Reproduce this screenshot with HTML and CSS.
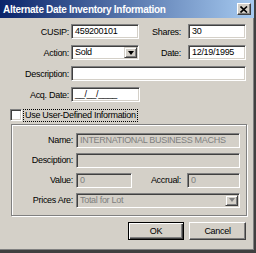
FILE: index.html
```html
<!DOCTYPE html>
<html lang="en">
<head>
    <meta charset="UTF-8">
    <title>Alternate Date Inventory Information</title>
    <link rel="stylesheet" href="styles.css">
</head>
<body>
    <div class="dialog">
        <div class="titlebar">
            <span class="title">Alternate Date Inventory Information</span>
            <span class="close-btn">
                <svg width="8" height="7" viewBox="0 0 8 7"><path d="M0.5 0.5 L7 6.5 M7 0.5 L0.5 6.5" stroke="#000" stroke-width="1.6"/></svg>
            </span>
        </div>

        <div class="content">
            <div class="row">
                <span class="lbl lbl-main">CUSIP:</span>
                <div class="field w-short">459200101</div>
                <span class="lbl lbl-side">Shares:</span>
                <div class="field w-side">30</div>
            </div>
            <div class="row">
                <span class="lbl lbl-main">Action:</span>
                <div class="field select w-short">
                    <span class="select-text">Sold</span>
                    <span class="drop-btn"><span class="arrow"></span></span>
                </div>
                <span class="lbl lbl-side">Date:</span>
                <div class="field w-side">12/19/1995</div>
            </div>
            <div class="row">
                <span class="lbl lbl-main">Description:</span>
                <div class="field w-long"></div>
            </div>
            <div class="row">
                <span class="lbl lbl-main">Acq. Date:</span>
                <div class="field w-acq">__/__/____</div>
            </div>

            <div class="check-row">
                <span class="checkbox"></span>
                <span class="check-label">Use User-Defined Information</span>
            </div>

            <div class="groupbox">
                <div class="row">
                    <span class="lbl lbl-grp">Name:</span>
                    <div class="field disabled w-grp">INTERNATIONAL BUSINESS MACHS</div>
                </div>
                <div class="row">
                    <span class="lbl lbl-grp">Desciption:</span>
                    <div class="field disabled w-grp"></div>
                </div>
                <div class="row">
                    <span class="lbl lbl-grp">Value:</span>
                    <div class="field disabled w-value">0</div>
                    <span class="lbl lbl-accrual">Accrual:</span>
                    <div class="field disabled w-accrual">0</div>
                </div>
                <div class="row">
                    <span class="lbl lbl-grp">Prices Are:</span>
                    <div class="field select disabled w-grp">
                        <span class="select-text">Total for Lot</span>
                        <span class="drop-btn"><span class="arrow"></span></span>
                    </div>
                </div>
            </div>

            <div class="buttons">
                <button class="btn default">OK</button>
                <button class="btn">Cancel</button>
            </div>
        </div>
    </div>
</body>
</html>
```

FILE: styles.css
```css
:root {
    --face: #d4d0c8;
    --shadow: #808080;
    --dark: #404040;
    --light: #ffffff;
}

* {
    margin: 0;
    padding: 0;
    box-sizing: border-box;
}

body {
    background: var(--face);
    font-family: "Liberation Sans", Arial, sans-serif;
    font-size: 9px;
    letter-spacing: -0.3px;
    color: #000;
}

.dialog {
    width: 256px;
    height: 253px;
    background: var(--face);
    border-right: 2px solid var(--dark);
    border-bottom: 3px solid var(--dark);
    box-shadow: inset -1px -1px var(--shadow);
    display: flex;
    flex-direction: column;
}

.titlebar {
    height: 18px;
    background: linear-gradient(to right, #0a246a, #a6caf0);
    display: flex;
    align-items: center;
    justify-content: space-between;
    padding: 0 3px 0 3px;
}

.title {
    color: #fff;
    font-weight: bold;
    font-size: 10px;
    letter-spacing: -0.3px;
}

.close-btn {
    width: 14px;
    height: 12px;
    background: var(--face);
    border: 1px solid;
    border-color: var(--light) var(--dark) var(--dark) var(--light);
    box-shadow: inset -1px -1px var(--shadow);
    display: flex;
    align-items: center;
    justify-content: center;
}

.content {
    display: flex;
    flex-direction: column;
    gap: 6px;
    padding-top: 6px;
}

.row {
    display: flex;
    align-items: center;
    height: 15px;
}

.lbl {
    text-align: right;
    white-space: nowrap;
}

.lbl-main { width: 69px; margin-right: 2px; }
.lbl-side { width: 42px; margin-right: 7px; }
.lbl-grp { width: 61px; margin-right: 3px; }
.lbl-accrual { width: 49px; margin-right: 6px; }

.field {
    height: 15px;
    background: #fff;
    border: 1px solid;
    border-color: var(--shadow) var(--light) var(--light) var(--shadow);
    box-shadow: inset 1px 1px var(--dark), inset -1px -1px var(--face);
    padding: 0 3px;
    line-height: 13px;
    white-space: nowrap;
    overflow: hidden;
}

.field.disabled {
    background: var(--face);
    color: var(--shadow);
}

.w-short { width: 68px; }
.w-side { width: 58px; }
.w-long { width: 175px; }
.w-acq { width: 69px; }
.w-grp { width: 164px; }
.w-value { width: 56px; }
.w-accrual { width: 53px; }

.groupbox .row { height: 14px; }
.groupbox .field { height: 15px; line-height: 13px; }

.select {
    display: flex;
    padding: 1px 1px 1px 3px;
}

.select-text {
    flex: 1;
    line-height: 11px;
    overflow: hidden;
}

.drop-btn {
    width: 13px;
    background: var(--face);
    border: 1px solid;
    border-color: var(--face) var(--dark) var(--dark) var(--face);
    box-shadow: inset 1px 1px var(--light), inset -1px -1px var(--shadow);
    display: flex;
    align-items: center;
    justify-content: center;
}

.arrow {
    width: 0;
    height: 0;
    border-left: 3.5px solid transparent;
    border-right: 3.5px solid transparent;
    border-top: 4px solid #000;
}

.disabled .arrow {
    border-top-color: var(--shadow);
}

.check-row {
    display: flex;
    align-items: center;
    height: 12px;
    margin-top: 1px;
    padding-left: 10px;
}

.checkbox {
    width: 12px;
    height: 12px;
    background: #fff;
    border: 1px solid;
    border-color: var(--shadow) var(--light) var(--light) var(--shadow);
    box-shadow: inset 1px 1px var(--dark), inset -1px -1px var(--face);
}

.check-label {
    margin-left: 2px;
    padding: 0 1px;
    outline: 1px dotted #000;
    line-height: 11px;
}

.groupbox {
    margin: -3px 0 0 11px;
    width: 236px;
    height: 92px;
    border: 1px solid var(--shadow);
    box-shadow: inset 1px 1px var(--light), 1px 1px var(--light);
    display: flex;
    flex-direction: column;
    gap: 6px;
    padding-top: 8px;
}

.buttons {
    display: flex;
    justify-content: flex-end;
    gap: 5px;
    padding-right: 8px;
}

.btn {
    width: 57px;
    height: 18px;
    background: var(--face);
    border: 1px solid;
    border-color: var(--light) var(--dark) var(--dark) var(--light);
    box-shadow: inset -1px -1px var(--shadow);
    font-family: inherit;
    font-size: 9px;
    letter-spacing: -0.3px;
    color: #000;
}

.btn.default {
    width: 56px;
    border-color: #000;
    box-shadow: inset 1px 1px var(--light), inset -1px -1px var(--dark), inset -2px -2px var(--shadow);
}
```
